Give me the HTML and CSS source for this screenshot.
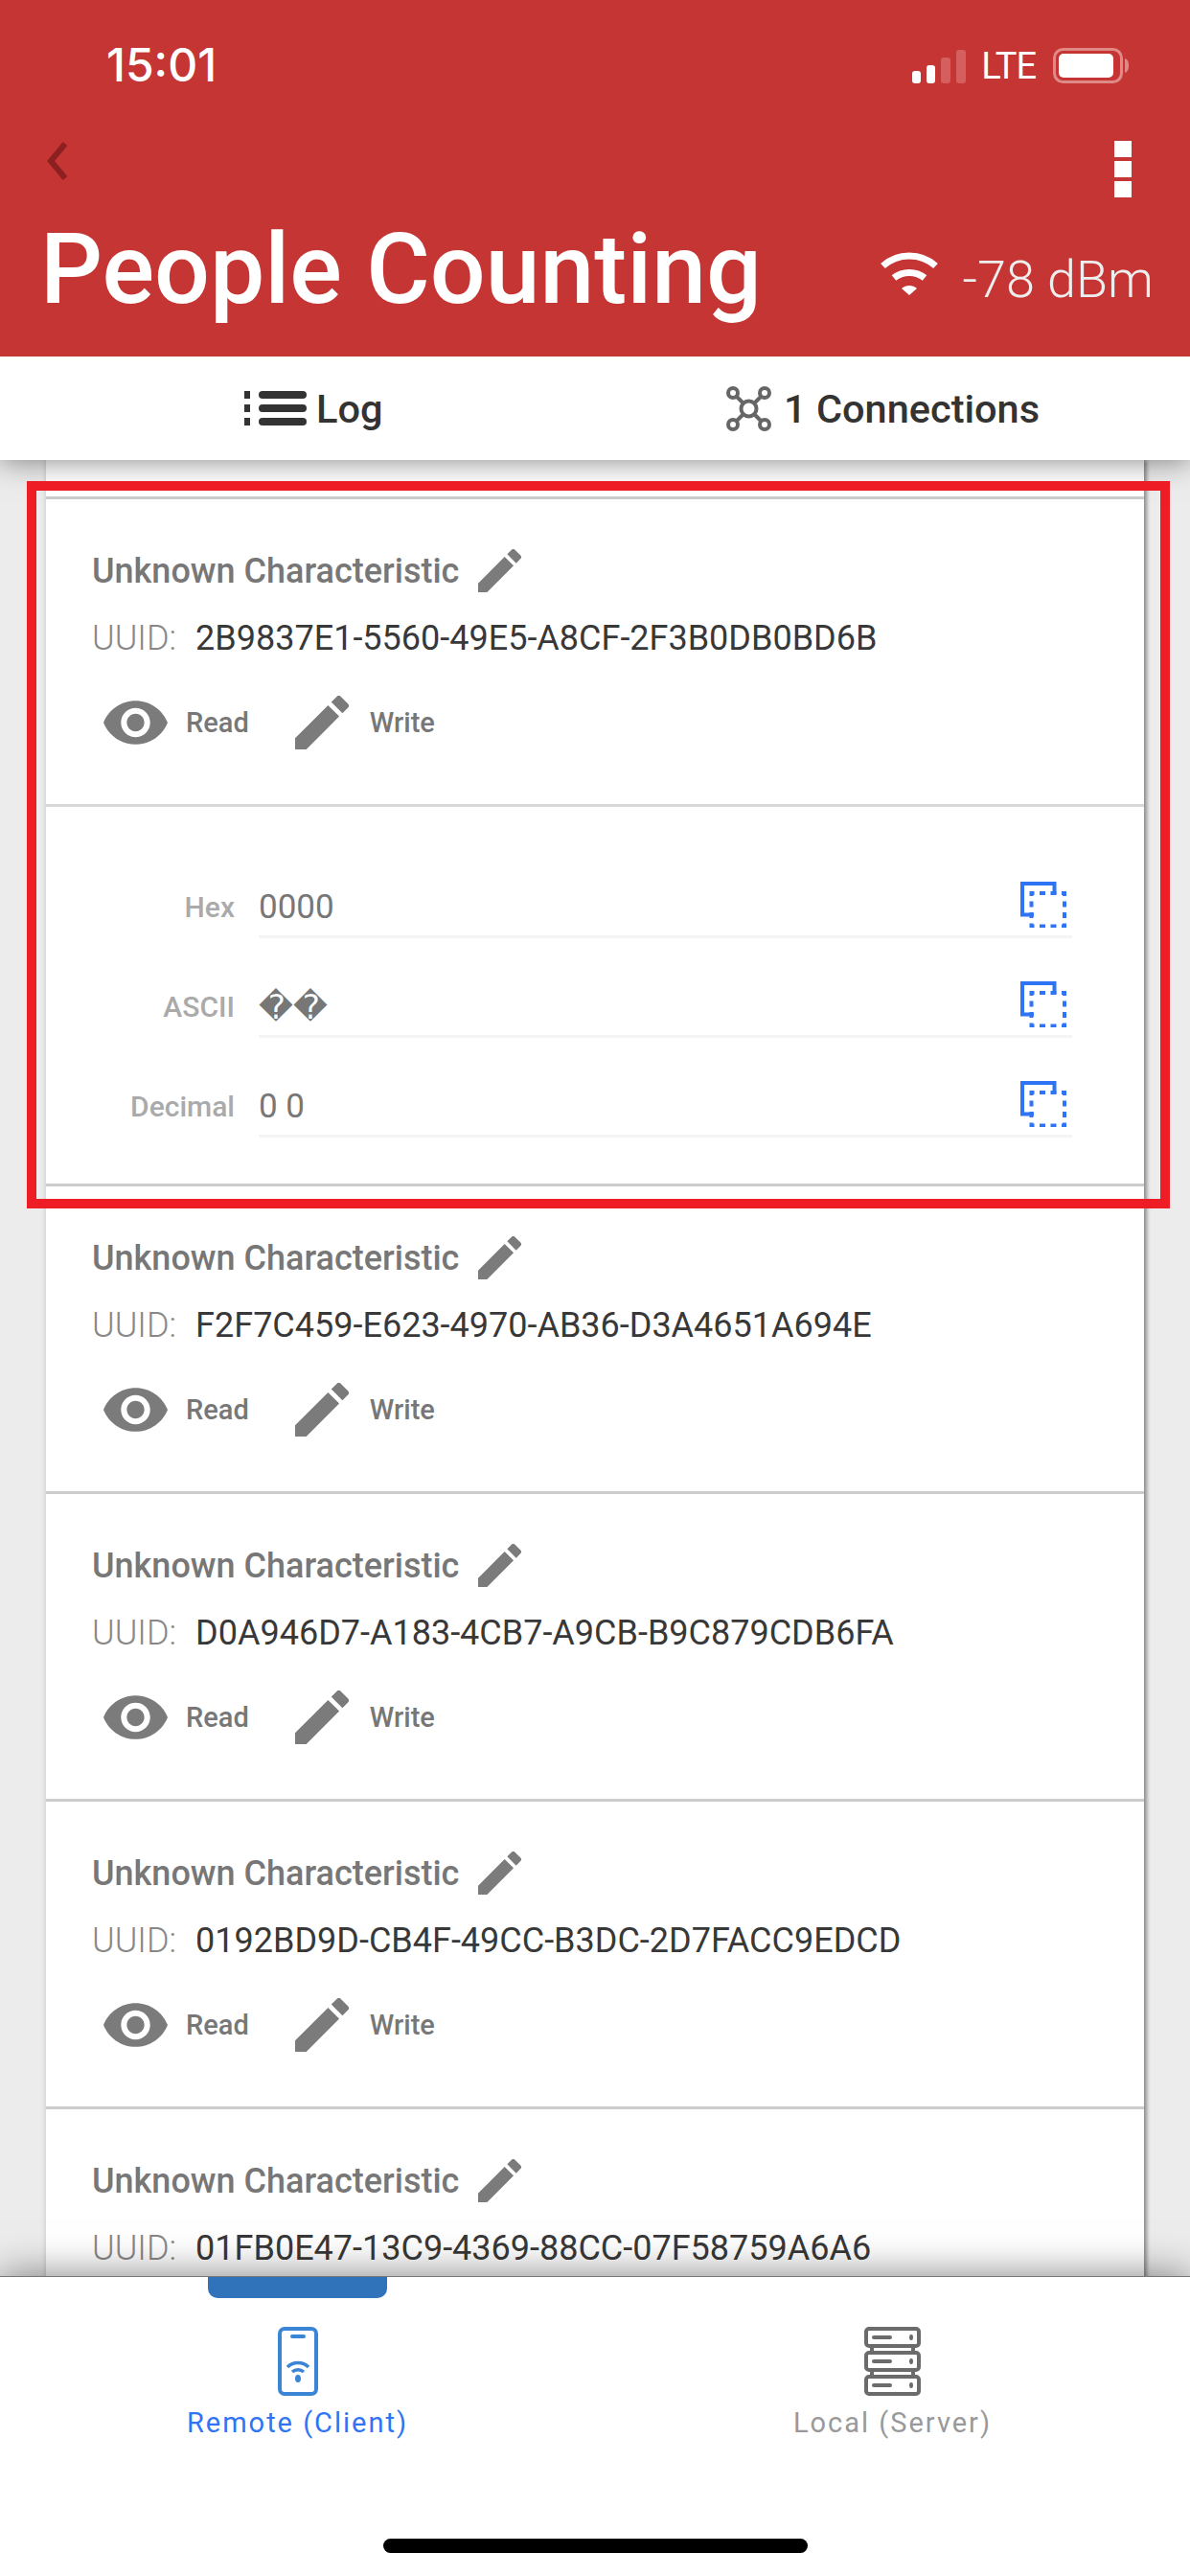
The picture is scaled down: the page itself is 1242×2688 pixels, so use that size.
FILE: index.html
```html
<!DOCTYPE html>
<html lang="en">
<head>
<meta charset="utf-8">
<title>People Counting</title>
<link rel="stylesheet" href="styles.css">
</head>
<body>
<svg class="sprites" width="0" height="0" aria-hidden="true">
  <symbol id="pencil" viewBox="3 3 18 18"><path fill="currentColor" d="M3 17.25V21h3.75L17.81 9.94l-3.75-3.75L3 17.25zM20.71 7.04a1 1 0 0 0 0-1.41l-2.34-2.34a1 1 0 0 0-1.41 0l-1.83 1.83 3.75 3.75 1.83-1.83z"/></symbol>
  <symbol id="eye" viewBox="1 4.5 22 15"><path fill="currentColor" d="M12 4.5C7 4.5 2.73 7.61 1 12c1.73 4.39 6 7.5 11 7.5s9.27-3.11 11-7.5c-1.73-4.39-6-7.5-11-7.5zM12 17c-2.76 0-5-2.24-5-5s2.24-5 5-5 5 2.24 5 5-2.24 5-5 5zm0-8c-1.66 0-3 1.34-3 3s1.34 3 3 3 3-1.34 3-3-1.34-3-3-3z"/></symbol>
  <symbol id="copy" viewBox="0 0 48 48">
    <path fill="none" stroke="currentColor" stroke-width="4" d="M14 34.5H2V2h33.5v11"/>
    <rect x="11.5" y="12" width="34.5" height="34.5" fill="none" stroke="currentColor" stroke-width="4" stroke-dasharray="6 5.5" stroke-dashoffset="3"/>
  </symbol>
</svg>

<div class="screen">
  <header class="header">
    <div class="status">
      <span class="time">15:01</span>
      <div class="status-right">
        <div class="signal">
          <span class="bar bar-1"></span>
          <span class="bar bar-2"></span>
          <span class="bar bar-3"></span>
          <span class="bar bar-4"></span>
        </div>
        <span class="lte">LTE</span>
        <svg class="battery" viewBox="0 0 79 37" width="79" height="37">
          <rect x="1.5" y="1.5" width="70" height="34" rx="9" fill="none" stroke="#e08a88" stroke-width="3"/>
          <rect x="6" y="6" width="57" height="25" rx="5" fill="#fff"/>
          <path d="M75 11c3 1 4 4 4 7.500s-1 6.500-4 7.500z" fill="#e08a88"/>
        </svg>
      </div>
    </div>
    <div class="nav">
      <svg class="back" viewBox="0 0 24 40" width="24" height="40"><path d="M20 2 5 20l15 18" fill="none" stroke="#8c2020" stroke-width="6"/></svg>
      <div class="kebab"><span></span><span></span><span></span></div>
    </div>
    <div class="title-row">
      <h1 class="title">People Counting</h1>
      <div class="rssi">
        <svg class="wifi" viewBox="0 0 62 45" width="62" height="45">
          <path d="M3.500 14.500C19 .5 43 .5 58.500 14.500" fill="none" stroke="#fff" stroke-width="7"/>
          <path d="M15 27c9-7.500 23-7.500 32 0" fill="none" stroke="#fff" stroke-width="7"/>
          <path d="M23 38c4.500-4 11.500-4 16 0l-8 7z" fill="#fff"/>
        </svg>
        <span class="dbm">-78 dBm</span>
      </div>
    </div>
  </header>

  <nav class="tabs">
    <div class="tab tab-log">
      <svg class="log-icon" viewBox="0 0 65 36" width="65" height="36">
        <path fill="#333" d="M0 0h6v8H0zM0 14h6v8H0zM0 28h6v8H0z"/>
        <rect x="15" y="0" width="50" height="8" rx="4" fill="#333"/>
        <rect x="15" y="14" width="50" height="8" rx="4" fill="#333"/>
        <rect x="15" y="28" width="50" height="8" rx="4" fill="#333"/>
      </svg>
      <span>Log</span>
    </div>
    <div class="tab tab-conn">
      <svg class="conn-icon" viewBox="0 0 47 47" width="47" height="47">
        <g fill="none" stroke="#666" stroke-width="4">
          <circle cx="23.500" cy="23.500" r="8"/>
          <circle cx="7" cy="7" r="5"/>
          <circle cx="40" cy="7" r="5"/>
          <circle cx="7" cy="40" r="5"/>
          <circle cx="40" cy="40" r="5"/>
          <path d="M11 11l7 7M36 11l-7 7M11 36l7-7M36 36l-7-7"/>
        </g>
      </svg>
      <span>1 Connections</span>
    </div>
  </nav>

  <main class="content">
    <div class="card">
      <section class="char">
        <div class="char-title"><span>Unknown Characteristic</span><svg class="pencil-sm"><use href="#pencil"/></svg></div>
        <div class="char-uuid"><span class="uuid-label">UUID:</span><span class="uuid-value">2B9837E1-5560-49E5-A8CF-2F3B0DB0BD6B</span></div>
        <div class="char-actions">
          <svg class="eye"><use href="#eye"/></svg><span class="action-read">Read</span>
          <svg class="pencil-lg"><use href="#pencil"/></svg><span>Write</span>
        </div>
      </section>
      <section class="values">
        <div class="value-row">
          <span class="value-label">Hex</span>
          <div class="value-field"><span class="value-text">0000</span><svg class="copy"><use href="#copy"/></svg></div>
        </div>
        <div class="value-row">
          <span class="value-label">ASCII</span>
          <div class="value-field"><span class="value-text value-ascii">��</span><svg class="copy"><use href="#copy"/></svg></div>
        </div>
        <div class="value-row">
          <span class="value-label">Decimal</span>
          <div class="value-field"><span class="value-text">0 0</span><svg class="copy"><use href="#copy"/></svg></div>
        </div>
      </section>
      <section class="char">
        <div class="char-title"><span>Unknown Characteristic</span><svg class="pencil-sm"><use href="#pencil"/></svg></div>
        <div class="char-uuid"><span class="uuid-label">UUID:</span><span class="uuid-value">F2F7C459-E623-4970-AB36-D3A4651A694E</span></div>
        <div class="char-actions">
          <svg class="eye"><use href="#eye"/></svg><span class="action-read">Read</span>
          <svg class="pencil-lg"><use href="#pencil"/></svg><span>Write</span>
        </div>
      </section>
      <section class="char">
        <div class="char-title"><span>Unknown Characteristic</span><svg class="pencil-sm"><use href="#pencil"/></svg></div>
        <div class="char-uuid"><span class="uuid-label">UUID:</span><span class="uuid-value">D0A946D7-A183-4CB7-A9CB-B9C879CDB6FA</span></div>
        <div class="char-actions">
          <svg class="eye"><use href="#eye"/></svg><span class="action-read">Read</span>
          <svg class="pencil-lg"><use href="#pencil"/></svg><span>Write</span>
        </div>
      </section>
      <section class="char">
        <div class="char-title"><span>Unknown Characteristic</span><svg class="pencil-sm"><use href="#pencil"/></svg></div>
        <div class="char-uuid"><span class="uuid-label">UUID:</span><span class="uuid-value">0192BD9D-CB4F-49CC-B3DC-2D7FACC9EDCD</span></div>
        <div class="char-actions">
          <svg class="eye"><use href="#eye"/></svg><span class="action-read">Read</span>
          <svg class="pencil-lg"><use href="#pencil"/></svg><span>Write</span>
        </div>
      </section>
      <section class="char">
        <div class="char-title"><span>Unknown Characteristic</span><svg class="pencil-sm"><use href="#pencil"/></svg></div>
        <div class="char-uuid"><span class="uuid-label">UUID:</span><span class="uuid-value">01FB0E47-13C9-4369-88CC-07F58759A6A6</span></div>
      </section>
    </div>
    <div class="highlight"></div>
  </main>

  <footer class="bottom">
    <div class="bottom-tabs">
      <div class="bottom-tab bottom-tab-active">
        <span class="indicator"></span>
        <svg class="phone-icon" viewBox="0 0 42 72" width="42" height="72">
          <rect x="2" y="2" width="38" height="68" rx="5" fill="none" stroke="#3b85d6" stroke-width="4"/>
          <rect x="13" y="8" width="16" height="4" rx="2" fill="#3b85d6"/>
          <path d="M10 42c6-6 16-6 22 0M15 47c3.500-3 8.500-3 12 0" fill="none" stroke="#3b85d6" stroke-width="3.500"/>
          <ellipse cx="21" cy="54" rx="3" ry="4" fill="#3b85d6"/>
        </svg>
        <span class="bottom-label">Remote (Client)</span>
      </div>
      <div class="bottom-tab">
        <span class="indicator indicator-off"></span>
        <svg class="server-icon" viewBox="0 0 59 72" width="59" height="72">
          <g fill="none" stroke="#6b6b6b" stroke-width="4">
            <rect x="2" y="2" width="55" height="18" rx="3"/>
            <rect x="2" y="27" width="55" height="18" rx="3"/>
            <rect x="2" y="52" width="55" height="18" rx="3"/>
            <path d="M8 20v7M51 20v7M8 45v7M51 45v7"/>
          </g>
          <g fill="#6b6b6b">
            <rect x="8" y="9" width="21" height="4" rx="2"/>
            <rect x="8" y="34" width="21" height="4" rx="2"/>
            <rect x="8" y="59" width="21" height="4" rx="2"/>
            <ellipse cx="49" cy="11" rx="2" ry="3"/>
            <ellipse cx="49" cy="36" rx="2" ry="3"/>
            <ellipse cx="49" cy="61" rx="2" ry="3"/>
          </g>
        </svg>
        <span class="bottom-label">Local (Server)</span>
      </div>
    </div>
    <div class="home-bar"></div>
  </footer>
</div>
</body>
</html>
```

FILE: styles.css
```css
* { box-sizing: border-box; }

html, body {
  margin: 0;
  padding: 0;
  background: #fff;
}

.sprites { display: block; height: 0; }

.screen {
  width: 1242px;
  height: 2688px;
  display: flex;
  flex-direction: column;
  overflow: hidden;
  font-family: Roboto, "Noto Sans", sans-serif;
  background: #fff;
}

/* header */
.header {
  height: 372px;
  background: #c53533;
  color: #fff;
  flex: none;
  position: relative;
  z-index: 3;
}

.status {
  height: 136px;
  display: flex;
  align-items: center;
  justify-content: space-between;
  padding: 0 64px 0 111px;
}

.time {
  font-family: Inter, Roboto, sans-serif;
  font-size: 48px;
  font-weight: 500;
  line-height: 50px;
}

.status-right {
  display: flex;
  align-items: flex-end;
  height: 37px;
}

.signal {
  display: flex;
  align-items: flex-end;
  gap: 6px;
  height: 35px;
}

.bar {
  width: 9px;
  background: #fff;
  border-radius: 3px;
}
.bar-1 { height: 13px; }
.bar-2 { height: 19px; }
.bar-3 { height: 27px; background: #d45f5e; width: 10px; }
.bar-4 { height: 35px; background: #d45f5e; width: 10px; }

.lte {
  font-size: 38px;
  letter-spacing: -1px;
  line-height: 35px;
  margin-left: 16px;
  height: 35px;
}

.battery { margin-left: 18px; }

.nav {
  height: 82px;
  display: flex;
  justify-content: space-between;
  align-items: flex-start;
  padding: 11px 61px 0 48px;
}

.back { margin-top: 1px; }

.kebab {
  display: flex;
  flex-direction: column;
  gap: 4px;
}
.kebab span {
  display: block;
  width: 18px;
  height: 17px;
  background: #fff;
}

.title-row {
  display: flex;
  justify-content: space-between;
  align-items: flex-start;
  padding: 3px 38px 0 42px;
}

.title {
  margin: 0;
  font-size: 102px;
  font-weight: 500;
  line-height: 120px;
}

.rssi {
  display: flex;
  align-items: flex-start;
  gap: 24px;
  margin-top: 42px;
}

.wifi { flex: none; }

.dbm {
  font-size: 54px;
  font-weight: 300;
  line-height: 60px;
  color: #eee;
  margin-top: -1px;
}

/* tabs */
.tabs {
  height: 108px;
  flex: none;
  display: grid;
  grid-template-columns: 621px 621px;
  background: #fff;
  box-shadow: 0 0 30px rgba(0, 0, 0, 0.5);
  position: relative;
  z-index: 2;
  color: #333;
  font-size: 41.5px;
  font-weight: 500;
}

.tab {
  display: flex;
  align-items: center;
}

.tab-log {
  padding-left: 255px;
  gap: 10px;
}

.tab-conn {
  padding-left: 137px;
  gap: 13px;
}

/* list */
.content {
  flex: 1;
  min-height: 0;
  background: #ececec;
  position: relative;
  overflow: hidden;
  padding: 0 48px;
}

.card {
  background: #fff;
  padding-top: 38px;
  min-height: 100%;
  box-shadow: 3px 0 4px rgba(0, 0, 0, 0.4), -2px 0 4px rgba(0, 0, 0, 0.08);
}

.char {
  border-top: 3px solid #ccc;
  padding: 52px 0 57px 48px;
}

.char-title {
  height: 45px;
  display: flex;
  align-items: center;
  gap: 19px;
  font-size: 36px;
  font-weight: 500;
  color: #777;
}

.pencil-sm {
  width: 47px;
  height: 45px;
  color: #7b7b7b;
}

.char-uuid {
  margin-top: 26px;
  height: 44px;
  display: flex;
  align-items: center;
  gap: 20px;
  font-size: 36px;
}

.uuid-label {
  color: #888;
  font-weight: 300;
}

.uuid-value {
  color: #383838;
}

.char-actions {
  margin-top: 38px;
  padding-left: 12px;
  height: 56px;
  display: flex;
  align-items: center;
  font-size: 29px;
  font-weight: 500;
  color: #777;
}

.eye {
  width: 67px;
  height: 46px;
  color: #7b7b7b;
  margin-right: 19px;
}

.action-read { margin-right: 48px; }

.pencil-lg {
  width: 56px;
  height: 56px;
  color: #7b7b7b;
  margin-right: 22px;
}

/* expanded values */
.values {
  border-top: 3px solid #d8d8d8;
  padding: 33px 0 48px;
}

.value-row {
  display: grid;
  grid-template-columns: 197px 849px;
  column-gap: 25px;
  height: 104px;
  align-items: end;
}

.value-label {
  text-align: right;
  font-size: 30px;
  font-weight: 500;
  color: #aaa;
  line-height: 34px;
  padding-bottom: 15px;
}

.value-field {
  height: 64px;
  display: flex;
  align-items: flex-start;
  justify-content: space-between;
  border-bottom: 3px solid #f4f4f4;
  padding: 0 6px 0 0;
}

.value-text {
  font-size: 35px;
  color: #777;
  line-height: 40px;
  margin-top: 12px;
}

.value-ascii {
  font-family: "DejaVu Sans", sans-serif;
}

.copy {
  width: 48px;
  height: 48px;
  color: #2f74f5;
  margin-top: 5px;
}

/* annotation */
.highlight {
  position: absolute;
  left: 28px;
  top: 22px;
  width: 1193px;
  height: 759px;
  border: 10px solid #ee1c25;
  z-index: 3;
}

/* bottom */
.bottom {
  height: 313px;
  flex: none;
  background: #fff;
  border-top: 1px solid #777;
  box-shadow: 0 0 40px rgba(0, 0, 0, 0.5);
  position: relative;
  z-index: 2;
  display: flex;
  flex-direction: column;
  padding-bottom: 24px;
}

.bottom-tabs {
  display: grid;
  grid-template-columns: 621px 621px;
}

.bottom-tab {
  display: flex;
  flex-direction: column;
  align-items: center;
  color: #999;
}

.bottom-tab-active { color: #2f74f5; }

.indicator {
  display: block;
  width: 187px;
  height: 22px;
  background: #3173bb;
  border-radius: 0 0 10px 10px;
}

.indicator-off { visibility: hidden; }

.phone-icon, .server-icon { margin-top: 30px; }

.bottom-label {
  margin-top: 11px;
  font-size: 29px;
  letter-spacing: 2px;
  line-height: 34px;
}

.home-bar {
  margin: auto auto 0;
  width: 443px;
  height: 15px;
  border-radius: 8px;
  background: #000;
}
```
